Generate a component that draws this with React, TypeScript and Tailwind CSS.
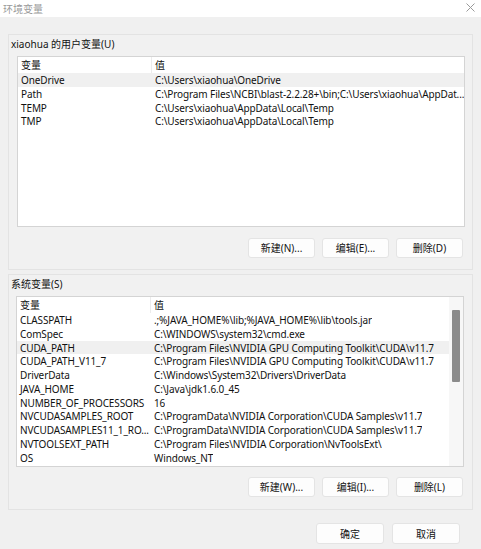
import React from "react";

const userVars = [
  { name: "OneDrive", value: "C:\\Users\\xiaohua\\OneDrive", selected: true },
  { name: "Path", value: "C:\\Program Files\\NCBI\\blast-2.2.28+\\bin;C:\\Users\\xiaohua\\AppDat..." },
  { name: "TEMP", value: "C:\\Users\\xiaohua\\AppData\\Local\\Temp" },
  { name: "TMP", value: "C:\\Users\\xiaohua\\AppData\\Local\\Temp" },
];

const systemVars = [
  { name: "CLASSPATH", value: ".;%JAVA_HOME%\\lib;%JAVA_HOME%\\lib\\tools.jar" },
  { name: "ComSpec", value: "C:\\WINDOWS\\system32\\cmd.exe" },
  { name: "CUDA_PATH", value: "C:\\Program Files\\NVIDIA GPU Computing Toolkit\\CUDA\\v11.7", selected: true },
  { name: "CUDA_PATH_V11_7", value: "C:\\Program Files\\NVIDIA GPU Computing Toolkit\\CUDA\\v11.7" },
  { name: "DriverData", value: "C:\\Windows\\System32\\Drivers\\DriverData" },
  { name: "JAVA_HOME", value: "C:\\Java\\jdk1.6.0_45" },
  { name: "NUMBER_OF_PROCESSORS", value: "16" },
  { name: "NVCUDASAMPLES_ROOT", value: "C:\\ProgramData\\NVIDIA Corporation\\CUDA Samples\\v11.7" },
  { name: "NVCUDASAMPLES11_1_RO...", value: "C:\\ProgramData\\NVIDIA Corporation\\CUDA Samples\\v11.7" },
  { name: "NVTOOLSEXT_PATH", value: "C:\\Program Files\\NVIDIA Corporation\\NvToolsExt\\" },
  { name: "OS", value: "Windows_NT" },
];

type Row = { name: string; value: string; selected?: boolean };

const Btn = ({ label }: { label: string }) => (
  <button className="w-[67px] h-[20px] bg-[#fdfdfd] border border-[#e4e4e4] rounded-[3px] text-[10px] leading-none text-[#111] flex items-center justify-center">
    {label}
  </button>
);

const VarList = ({ rows, scroll }: { rows: Row[]; scroll?: boolean }) => (
  <div className="relative w-[448px] h-[171px] bg-white border border-[#d4d4d4] overflow-hidden tracking-[-0.12px]">
    <div className="flex h-[16px] items-center">
      <div className="w-[134px] shrink-0 h-full pl-[3px] flex items-center border-r border-[#ececec]">变量</div>
      <div className="pl-[3px]">值</div>
    </div>
    {rows.map((r) => (
      <div
        key={r.name}
        className={`flex h-[13.8px] items-center whitespace-nowrap ${scroll ? "mr-[14px]" : ""} ${r.selected ? "bg-[#f0f0f0]" : ""}`}
      >
        <div className="w-[134px] shrink-0 pl-[3px] overflow-hidden">{r.name}</div>
        <div className="pl-[3px] overflow-hidden">{r.value}</div>
      </div>
    ))}
    {scroll && (
      <div className="absolute right-0 top-0 bottom-0 w-[14px] bg-[#f7f7f7] flex justify-center">
        <div className="mt-[13px] w-[8px] h-[72px] bg-[#8b8b8b] rounded-[1px]" />
      </div>
    )}
  </div>
);

export default function App() {
  return (
    <div
      className="w-[481px] h-[549px] bg-[#f0f0f0] text-[10px] leading-[14px] text-[#111] overflow-hidden"
      style={{ fontFamily: '"Noto Sans", "Noto Sans CJK SC", sans-serif' }}
    >
      <div className="h-[17px] bg-white flex items-center justify-between pl-[3px] pr-[6px]">
        <span className="text-[#9a9a9a] text-[10px]">环境变量</span>
        <svg width="9" height="9" viewBox="0 0 9 9" className="mb-[2px]">
          <path d="M0.5 0.5 L8.5 8.5 M8.5 0.5 L0.5 8.5" stroke="#9a9a9a" strokeWidth="1" />
        </svg>
      </div>

      <div className="mt-[17px] mx-[8px] h-[236px] border border-[#e3e3e3] bg-[#f1f1f1]">
        <div className="mt-[1px] pl-[2px] leading-[16px]">xiaohua 的用户变量(U)</div>
        <div className="mt-[4px] pl-[8px]">
          <VarList rows={userVars} />
        </div>
        <div className="mt-[11px] flex justify-end gap-[7px] pr-[9px]">
          <Btn label="新建(N)..." />
          <Btn label="编辑(E)..." />
          <Btn label="删除(D)" />
        </div>
      </div>

      <div className="mt-[4px] mx-[8px] h-[236px] border border-[#e3e3e3] bg-[#f1f1f1]">
        <div className="mt-[1px] pl-[2px] leading-[16px]">系统变量(S)</div>
        <div className="mt-[4px] pl-[7px]">
          <VarList rows={systemVars} scroll />
        </div>
        <div className="mt-[10px] flex justify-end gap-[7px] pr-[9px]">
          <Btn label="新建(W)..." />
          <Btn label="编辑(I)..." />
          <Btn label="删除(L)" />
        </div>
      </div>

      <div className="mt-[13px] flex justify-end gap-[8px] pr-[21px]">
        <button className="w-[68px] h-[21px] bg-[#fdfdfd] border border-[#e4e4e4] rounded-[3px] text-[10px]">确定</button>
        <button className="w-[68px] h-[21px] bg-[#fdfdfd] border border-[#e4e4e4] rounded-[3px] text-[10px]">取消</button>
      </div>
    </div>
  );
}
